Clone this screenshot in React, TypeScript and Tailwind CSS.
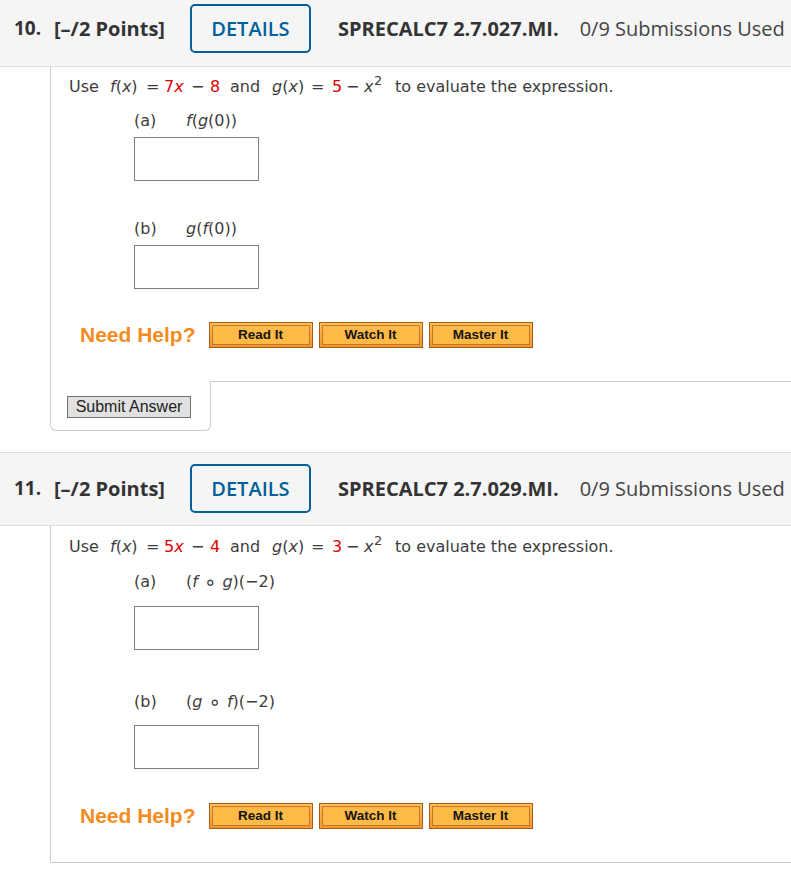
import React from "react";

const red = "text-[#e30000]";

function Header({ num, code, first }: { num: string; code: string; first?: boolean }) {
  return (
    <div
      className={
        "bg-[#f5f5f5] border-b border-[#dddddd] flex items-center whitespace-nowrap text-[#333333] " +
        (first ? "pt-[4px] pb-[13px]" : "border-t pt-[11px] pb-[12px]")
      }
      style={{ fontFamily: '"Open Sans", sans-serif' }}
    >
      <span className="ml-[14px] w-[40px] text-[19px] font-bold">{num}.</span>
      <span className="text-[20px] font-bold">[–/2 Points]</span>
      <div className="ml-[25px] h-[49px] w-[121px] shrink-0 border-2 border-[#00619e] rounded-[5px] flex items-center justify-center text-[20px] font-semibold text-[#00609c]">
        DETAILS
      </div>
      <span className="ml-[27px] text-[20px] font-bold">{code}</span>
      <span className="ml-[21px] text-[20px] text-[#444444]">0/9 Submissions Used</span>
    </div>
  );
}

function HelpBtn({ label }: { label: string }) {
  return (
    <div className="h-[26px] w-[104px] border border-[#a95c17] bg-gradient-to-b from-[#ffbe55] to-[#f3952a] p-[2px]">
      <div
        className="h-full w-full border border-[#c4772b] bg-[#feba47] flex items-center justify-center text-[13.5px] font-bold text-[#141414]"
        style={{ fontFamily: '"Liberation Sans", Arial, sans-serif' }}
      >
        {label}
      </div>
    </div>
  );
}

function NeedHelp({ mt }: { mt: number }) {
  return (
    <div className="flex items-center h-[26px] ml-[29px]" style={{ marginTop: mt }}>
      <span
        className="text-[21px] leading-[26px] font-bold text-[#f28c1e] mr-[13px]"
        style={{ fontFamily: '"Liberation Sans", Arial, sans-serif' }}
      >
        Need Help?
      </span>
      <HelpBtn label="Read It" />
      <div className="w-[6px]" />
      <HelpBtn label="Watch It" />
      <div className="w-[6px]" />
      <HelpBtn label="Master It" />
    </div>
  );
}

function Box({ mt }: { mt: number }) {
  return <div className="ml-[83px] h-[44px] w-[125px] border border-[#808080] bg-white" style={{ marginTop: mt }} />;
}

function Part({ label, children, mt }: { label: string; children: React.ReactNode; mt: number }) {
  return (
    <div className="ml-[83px] h-[20px] flex items-center whitespace-nowrap" style={{ marginTop: mt }}>
      <span className="w-[52px]">{label}</span>
      <span className="flex items-center">{children}</span>
    </div>
  );
}

function Ring() {
  return <span className="mx-[6px] text-[20px] leading-[20px]">∘</span>;
}

function Equation({ a, b, c }: { a: string; b: string; c: string }) {
  return (
    <div className="ml-[18px] h-[20px] flex items-center whitespace-nowrap">
      <span className="w-[41px]">Use</span>
      <span className="w-[36px]">
        <i>f</i>(<i>x</i>)
      </span>
      <span className="w-[18px]">=</span>
      <span className={"w-[27px] " + red}>
        {a}
        <i>x</i>
      </span>
      <span className="w-[19px]">−</span>
      <span className={"w-[20px] " + red}>{b}</span>
      <span className="w-[42px]">and</span>
      <span className="w-[39px]">
        <i>g</i>(<i>x</i>)
      </span>
      <span className="w-[21px]">=</span>
      <span className={"w-[14px] " + red}>{c}</span>
      <span className="w-[18px]">−</span>
      <span className="w-[31px] relative">
        <i>x</i>
        <span className="absolute left-[10px] -top-[4px] text-[13px]">2</span>
      </span>
      <span>to evaluate the expression.</span>
    </div>
  );
}

const contentFont = { fontFamily: '"DejaVu Sans", Verdana, sans-serif' };

export default function App() {
  return (
    <div className="w-[791px] h-[876px] bg-white overflow-hidden">
      <Header num="10" code="SPRECALC7 2.7.027.MI." first />
      {/* Question 10 */}
      <div className="ml-[50px] border-l border-[#cccccc] pt-[10px] pb-[33px] text-[16px] text-[#3d3d3d]" style={contentFont}>
        <Equation a="7" b="8" c="5" />
        <Part label="(a)" mt={14}>
          <i>f</i>(<i>g</i>(0))
        </Part>
        <Box mt={6} />
        <Part label="(b)" mt={38}>
          <i>g</i>(<i>f</i>(0))
        </Part>
        <Box mt={6} />
        <NeedHelp mt={33} />
      </div>
      <div className="flex">
        <div className="ml-[50px] w-[161px] h-[50px] border-l border-r border-b border-[#cccccc] rounded-b-[6px] flex items-start pt-[15px] pl-[16px]">
          <div
            className="h-[22px] w-[124px] border border-[#707070] bg-[#e1e1e1] flex items-center justify-center text-[16px] text-[#222222]"
            style={{ fontFamily: '"Liberation Sans", Arial, sans-serif' }}
          >
            Submit Answer
          </div>
        </div>
        <div className="flex-1 border-t border-[#cccccc]" />
      </div>
      <div className="h-[21px]" />
      <Header num="11" code="SPRECALC7 2.7.029.MI." />
      {/* Question 11 */}
      <div className="ml-[50px] border-l border-b border-[#cccccc] pt-[11px] pb-[33px] text-[16px] text-[#3d3d3d]" style={contentFont}>
        <Equation a="5" b="4" c="3" />
        <Part label="(a)" mt={15}>
          (<i>f</i>
          <Ring />
          <i>g</i>)(−2)
        </Part>
        <Box mt={14} />
        <Part label="(b)" mt={42}>
          (<i>g</i>
          <Ring />
          <i>f</i>)(−2)
        </Part>
        <Box mt={13} />
        <NeedHelp mt={34} />
      </div>
    </div>
  );
}
